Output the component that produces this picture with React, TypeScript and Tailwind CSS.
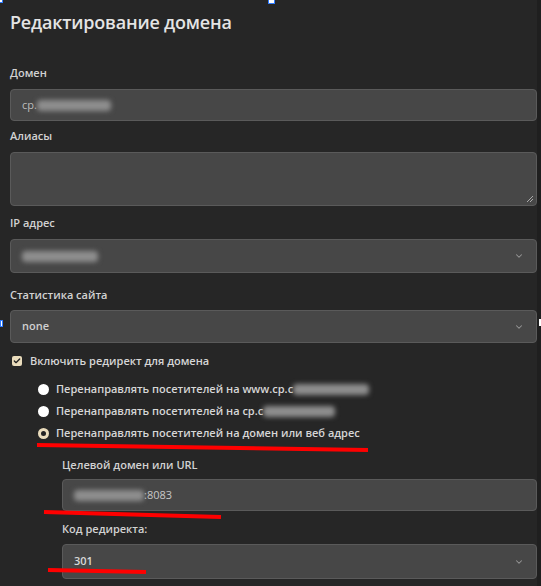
import { ChevronDown, Check } from 'lucide-react';

const label = 'text-[11px] leading-[16px] font-semibold text-[#d2d2d2]';
const field = 'flex items-center rounded-[4px] border border-[#5a5a5a] bg-[#474747] px-[11px] text-[11px] text-[#bdbdbd]';

function Blur({ w }: { w: number }) {
  return (
    <span className="inline-block h-[11px] rounded-sm bg-[#8e8e8e] blur-[2.5px]" style={{ width: w }} />
  );
}

function Radio({ checked, children }: { checked?: boolean; children: React.ReactNode }) {
  return (
    <div className="flex h-[22px] items-center gap-[7px]">
      {checked ? (
        <span className="flex h-[11px] w-[11px] items-center justify-center rounded-full bg-[#eadcbc]">
          <span className="h-[5px] w-[5px] rounded-full bg-[#222]" />
        </span>
      ) : (
        <span className="h-[11px] w-[11px] rounded-full bg-white" />
      )}
      <span className="flex items-center text-[11px] font-semibold text-[#d6d6d6]">{children}</span>
    </div>
  );
}

export default function App() {
  return (
    <div
      className="relative h-[586px] w-[541px] overflow-hidden bg-[#262626]"
      style={{ fontFamily: '"Open Sans", "Noto Sans", sans-serif' }}
    >
      <div className="pl-[10px] pr-[4px] pt-[10px]">
        <h1 className="text-[18px] leading-[24px] font-semibold tracking-[-0.2px] text-[#e4e4e4]">
          Редактирование домена
        </h1>

        <div className={`${label} mt-[31px]`}>Домен</div>
        <div className={`${field} mt-[8px] h-[32px]`}>
          <span>ср.</span>
          <Blur w={74} />
        </div>

        <div className={`${label} mt-[7px]`}>Алиасы</div>
        <div className="relative mt-[8px] h-[54px] rounded-[4px] border border-[#5a5a5a] bg-[#474747]">
          <svg className="absolute bottom-[2px] right-[2px]" width="8" height="8" viewBox="0 0 8 8">
            <path d="M1 7 L7 1 M4 7 L7 4" stroke="#aaa" strokeWidth="1" />
          </svg>
        </div>

        <div className={`${label} mt-[9px]`}>IP адрес</div>
        <div className={`${field} mt-[8px] h-[34px] justify-between pr-[12px]`}>
          <Blur w={76} />
          <ChevronDown className="h-[10px] w-[10px] text-[#999]" strokeWidth={2.5} />
        </div>

        <div className={`${label} mt-[14px]`}>Статистика сайта</div>
        <div className={`${field} mt-[7px] h-[33px] justify-between pr-[12px] font-semibold text-[#d0d0d0]`}>
          <span>none</span>
          <ChevronDown className="h-[10px] w-[10px] text-[#999]" strokeWidth={2.5} />
        </div>

        <div className="mt-[10px] flex h-[16px] items-center gap-[8px] pl-[2px]">
          <span className="flex h-[10px] w-[10px] items-center justify-center rounded-[2px] bg-[#eadcbc]">
            <Check className="h-[8px] w-[8px] text-[#222]" strokeWidth={4} />
          </span>
          <span className="text-[11px] font-semibold text-[#d6d6d6]">Включить редирект для домена</span>
        </div>

        <div className="mt-[9px] pl-[28px]">
          <Radio>
            Перенаправлять посетителей на www.ср.c<Blur w={76} />
          </Radio>
          <Radio>
            Перенаправлять посетителей на ср.c<Blur w={72} />
          </Radio>
          <Radio checked>Перенаправлять посетителей на домен или веб адрес</Radio>
        </div>

        <div className="pl-[52px]">
          <div className={`${label} mt-[13px] text-[#c8c8c8]`}>Целевой домен или URL</div>
          <div className={`${field} mt-[6px] h-[32px] text-[#c8c8c8]`}>
            <Blur w={70} />
            <span>:8083</span>
          </div>

          <div className={`${label} mt-[10px] text-[#c8c8c8]`}>Код редиректа:</div>
          <div className={`${field} mt-[7px] h-[35px] justify-between pr-[12px] font-semibold text-[#d8d8d8]`}>
            <span>301</span>
            <ChevronDown className="h-[10px] w-[10px] text-[#999]" strokeWidth={2.5} />
          </div>
        </div>
      </div>

      {/* right edge strip */}
      <div className="absolute right-0 top-0 h-full w-[4px] bg-[#1f1f1f]" />

      {/* selection handles */}
      <div className="absolute left-0 top-0 h-[3px] w-[3px] border-b border-r border-[#2f7bff] bg-white" />
      <div className="absolute left-[268px] top-0 h-[4px] w-[7px] border-x border-b border-[#2f7bff] bg-white" />
      <div className="absolute left-0 top-[320px] h-[7px] w-[3px] border border-[#2f7bff] bg-white" />
      <div className="absolute right-0 top-[319px] h-[7px] w-[2px] bg-white" />

      {/* red annotations */}
      <svg className="pointer-events-none absolute inset-0" width="541" height="586">
        <path d="M37 445 L368 450" stroke="#ff0000" strokeWidth="4" />
        <path d="M44 512 L221 517" stroke="#ff0000" strokeWidth="4" />
        <path d="M48 570 L146 572" stroke="#ff0000" strokeWidth="4" />
      </svg>
    </div>
  );
}
